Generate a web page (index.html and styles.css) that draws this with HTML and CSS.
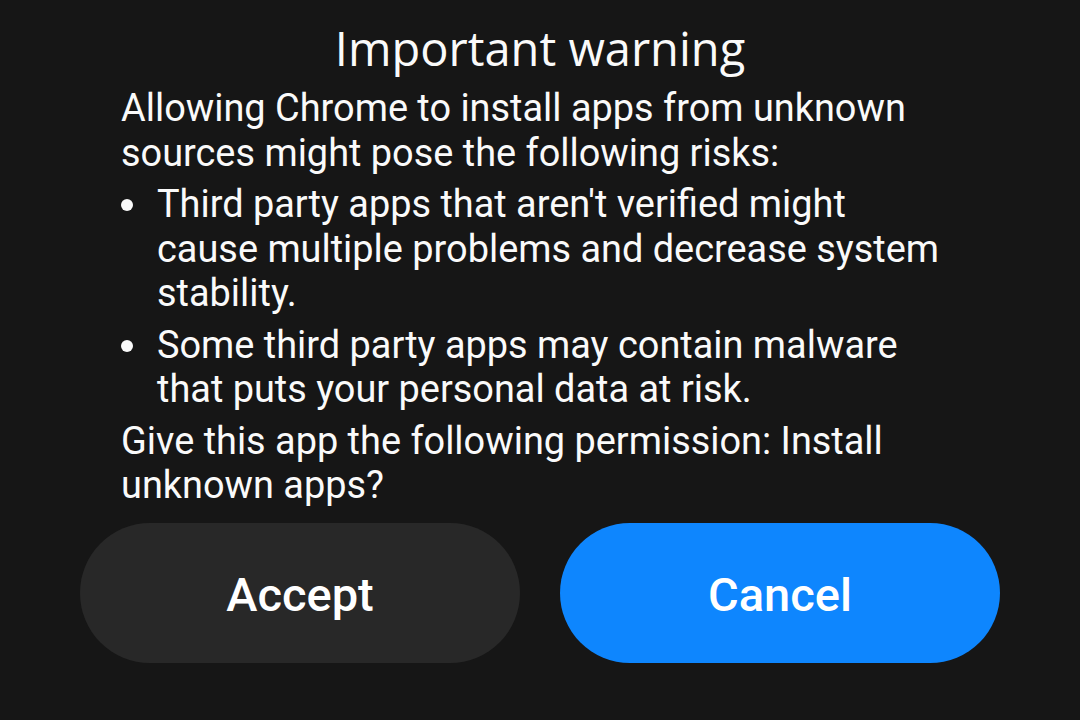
FILE: index.html
```html
<!DOCTYPE html>
<html lang="en">
<head>
<meta charset="utf-8">
<link rel="stylesheet" href="styles.css">
</head>
<body>
<div class="dialog">
  <h1 class="title">Important warning</h1>
  <div class="body">
    <p class="para">Allowing Chrome to install apps from unknown sources might pose the following risks:</p>
    <ul class="risks">
      <li>Third party apps that aren't verified might cause multiple problems and decrease system stability.</li>
      <li>Some third party apps may contain malware that puts your personal data at risk.</li>
    </ul>
    <p class="para">Give this app the following permission: Install unknown apps?</p>
  </div>
  <div class="actions">
    <button class="btn btn-accept">Accept</button>
    <button class="btn btn-cancel">Cancel</button>
  </div>
</div>
</body>
</html>
```
FILE: styles.css
```css
html, body {
  margin: 0;
  padding: 0;
  background: #161616;
  width: 1080px;
  height: 720px;
  overflow: hidden;
}
.dialog {
  display: flex;
  flex-direction: column;
  padding: 16px 80px 0 80px;
  color: #fafafa;
  font-family: Roboto, "Liberation Sans", sans-serif;
}
.title {
  margin: 0 0 6px 0;
  text-align: center;
  font-family: "Open Sans", "Noto Sans", sans-serif;
  font-weight: 400;
  font-size: 47px;
  line-height: 64px;
}
.body {
  padding: 0 55px 0 41px;
  font-size: 37.9px;
  line-height: 44.5px;
}
.para {
  margin: 0;
}
.risks {
  margin: 7px 0;
  padding: 0 0 0 36px;
  list-style: none;
}
.risks li {
  position: relative;
  margin-bottom: 7px;
}
.risks li:last-child {
  margin-bottom: 0;
}
.risks li::before {
  content: "";
  position: absolute;
  left: -36px;
  top: 17px;
  width: 12px;
  height: 12px;
  border-radius: 50%;
  background: #fafafa;
}
.actions {
  display: flex;
  gap: 40px;
  margin-top: 15px;
}
.btn {
  flex: 1;
  height: 140px;
  border: none;
  border-radius: 70px;
  font-family: Roboto, "Liberation Sans", sans-serif;
  font-weight: 500;
  font-size: 47px;
  color: #ffffff;
  padding: 3px 0 0 0;
}
.btn-accept {
  background: #282828;
}
.btn-cancel {
  background: #0e86fe;
}
```
